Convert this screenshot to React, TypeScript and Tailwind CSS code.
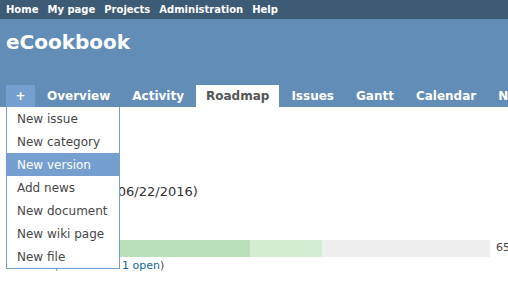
import { useState } from 'react';

const TOP_MENU = ['Home', 'My page', 'Projects', 'Administration', 'Help'];
const TABS = ['Overview', 'Activity', 'Roadmap', 'Issues', 'Gantt', 'Calendar', 'News'];
const NEW_ITEMS = [
  'New issue',
  'New category',
  'New version',
  'Add news',
  'New document',
  'New wiki page',
  'New file',
];

export default function App() {
  const [hovered] = useState('New version');

  return (
    <div
      className="w-[508px] h-[286px] overflow-hidden bg-white relative"
      style={{ fontFamily: '"DejaVu Sans", Verdana, sans-serif' }}
    >
      {/* Top menu */}
      <div className="h-[19px] bg-[#3e5b76] flex items-center pl-[6px] gap-[9px] text-[10px] font-bold text-white whitespace-nowrap">
        {TOP_MENU.map((m) => (
          <span key={m}>{m}</span>
        ))}
      </div>

      {/* Header */}
      <div className="h-[88px] bg-[#628db6] flex flex-col justify-between">
        <h1 className="pl-[6px] pt-[10px] text-[20px] leading-[26px] font-bold text-white">eCookbook</h1>
        <div className="flex pl-[6px] gap-[2px] h-[22px] text-[12px] font-bold whitespace-nowrap">
          <div className="relative shrink-0 w-[29px] bg-[#759fcf] text-white flex items-center justify-center">
            +
            {/* New menu dropdown */}
            <div className="absolute left-0 top-[22px] w-[114px] bg-white border border-[#759fcf] border-t-0 z-10 font-normal">
              {NEW_ITEMS.map((item) => (
                <div
                  key={item}
                  className={[
                    'h-[23px] flex items-center pl-[10px] text-[12px]',
                    item === hovered ? 'bg-[#759fcf] text-white' : 'text-[#484848]',
                  ].join(' ')}
                >
                  {item}
                </div>
              ))}
            </div>
          </div>
          {TABS.map((tab) => (
            <div
              key={tab}
              className={[
                'shrink-0 px-[10px] flex items-center',
                tab === 'Roadmap' ? 'bg-white text-[#555]' : 'text-white',
              ].join(' ')}
            >
              {tab}
            </div>
          ))}
        </div>
      </div>

      {/* Content */}
      <div className="pl-[10px] pt-[77px] text-[#333]">
        <div className="text-[13px] leading-[16px] whitespace-nowrap pl-[26px]">Version 0.1 (06/22/2016)</div>
        <div className="mt-[40px] flex items-center whitespace-nowrap">
          <div className="shrink-0 w-[480px] h-[17px] flex bg-[#eeeeee]">
            <div className="w-[240px] bg-[#bae0ba]" />
            <div className="w-[72px] bg-[#d3edd3]" />
          </div>
          <span className="ml-[6px] text-[11px] text-[#484848]">65%</span>
        </div>
        <div className="mt-[1px] -ml-[4px] text-[11px] text-[#484848] whitespace-nowrap">
          9 issues (<span className="text-[#169]">8 closed</span> — <span className="text-[#169]">1 open</span>)
        </div>
      </div>
    </div>
  );
}
